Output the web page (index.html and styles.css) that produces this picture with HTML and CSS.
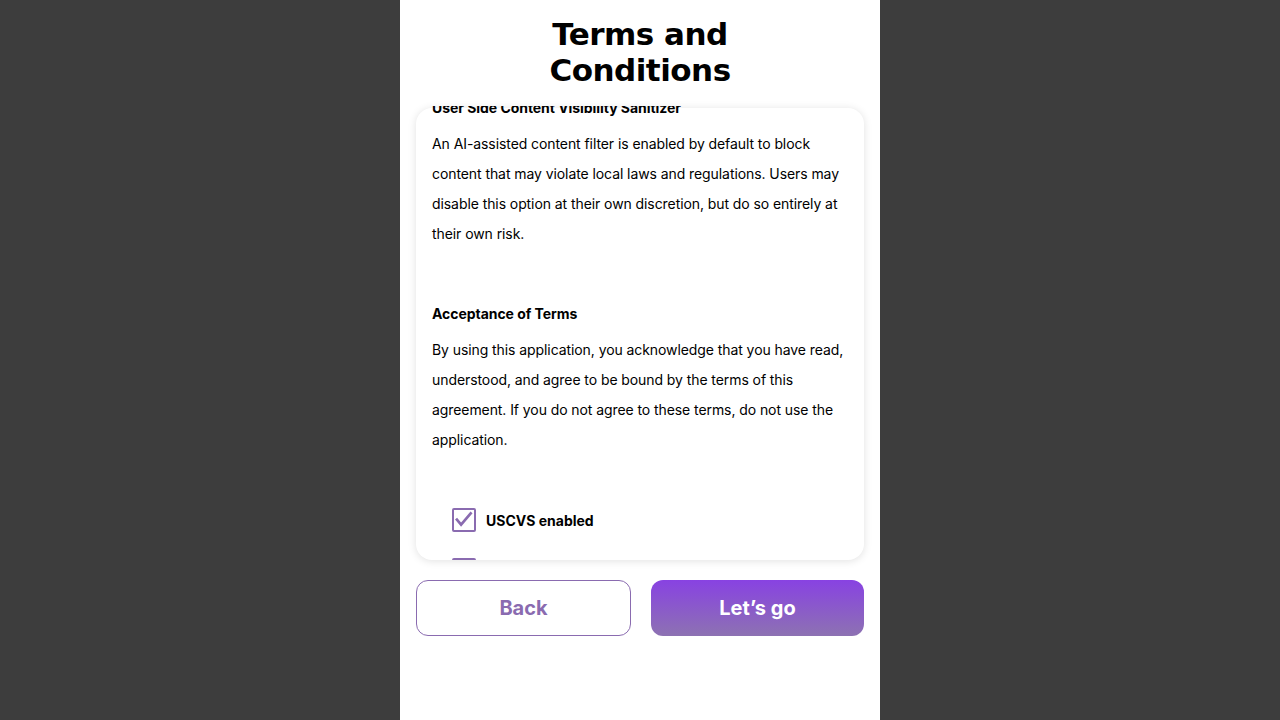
FILE: index.html
```html
<!DOCTYPE html>
<html lang="en">
<head>
<meta charset="utf-8">
<title>Terms and Conditions</title>
<link rel="stylesheet" href="styles.css">
</head>
<body>
<main class="screen">
  <h1 class="title">Terms and<br>Conditions</h1>
  <div class="card">
    <div class="card-body">
      <div class="card-content">
        <section class="section">
          <h2 class="section-title">User Side Content Visibility Sanitizer</h2>
          <p class="section-text">An AI-assisted content filter is enabled by default to block content that may violate local laws and regulations. Users may disable this option at their own discretion, but do so entirely at their own risk.</p>
        </section>
        <section class="section">
          <h2 class="section-title">Acceptance of Terms</h2>
          <p class="section-text">By using this application, you acknowledge that you have read, understood, and agree to be bound by the terms of this agreement. If you do not agree to these terms, do not use the application.</p>
        </section>
        <div class="checks">
          <label class="check-row">
            <span class="checkbox"><svg viewBox="0 0 24 24" width="20" height="20"><polyline points="3.5,11.5 8.5,17.5 20,4" fill="none" stroke="#8a6bb0" stroke-width="3.2" stroke-linecap="square"/></svg></span>
            <span class="check-label">USCVS enabled</span>
          </label>
          <label class="check-row">
            <span class="checkbox"><svg viewBox="0 0 24 24" width="20" height="20"><polyline points="3.5,11.5 8.5,17.5 20,4" fill="none" stroke="#8a6bb0" stroke-width="3.2" stroke-linecap="square"/></svg></span>
            <span class="check-label">I accept the terms</span>
          </label>
        </div>
      </div>
    </div>
  </div>
  <div class="actions">
    <button class="btn btn-back">Back</button>
    <button class="btn btn-go">Let’s go</button>
  </div>
</main>
</body>
</html>
```
FILE: styles.css
```css
* { box-sizing: border-box; }
html, body { margin: 0; padding: 0; }
body {
  background: #3d3d3d;
  font-family: Inter, "Liberation Sans", sans-serif;
  color: #000;
}
.screen {
  width: 480px;
  height: 720px;
  margin: 0 auto;
  background: #fff;
  padding: 16px 16px 0;
  display: flex;
  flex-direction: column;
}
.title {
  margin: 0;
  font-family: "DejaVu Sans", sans-serif;
  font-weight: 700;
  font-size: 31px;
  line-height: 36px;
  letter-spacing: -0.5px;
  text-align: center;
}
.card {
  margin-top: 20px;
  height: 452px;
  background: #fff;
  border-radius: 16px;
  box-shadow: 0 1px 8px rgba(0,0,0,0.12);
}
.card-body {
  margin-top: -2px;
  height: 454px;
  overflow: hidden;
  border-radius: 0 0 16px 16px;
  padding: 0 16px;
}
.card-content {
  margin-top: -9px;
}
.section { margin-bottom: 54px; }
.section-title {
  margin: 0 0 10px;
  font-size: 14px;
  font-weight: 700;
  line-height: 22px;
  letter-spacing: -0.05px;
}
.section-text {
  margin: 0;
  font-size: 14px;
  line-height: 30px;
  font-weight: 400;
  letter-spacing: -0.08px;
}
.checks {
  margin-top: -1px;
  padding-left: 20px;
  display: flex;
  flex-direction: column;
  gap: 26px;
}
.check-row {
  display: flex;
  align-items: center;
  gap: 10px;
  height: 24px;
}
.checkbox {
  width: 24px;
  height: 24px;
  border: 2px solid #8a6bb0;
  border-radius: 2px;
  display: flex;
  align-items: center;
  justify-content: center;
}
.check-label {
  font-size: 14px;
  font-weight: 700;
}
.actions {
  margin-top: 20px;
  display: flex;
  gap: 20px;
}
.btn {
  flex: 1 1 0;
  min-width: 0;
  height: 56px;
  border-radius: 12px;
  font-family: Inter, "Liberation Sans", sans-serif;
  font-size: 20px;
  font-weight: 700;
  cursor: pointer;
}
.btn-back {
  background: #fff;
  border: 1px solid #8a6bb0;
  color: #8a6bb0;
}
.btn-go {
  border: none;
  color: #fff;
  background: linear-gradient(180deg, #8842e2 0%, #8d72b2 100%);
}
```
